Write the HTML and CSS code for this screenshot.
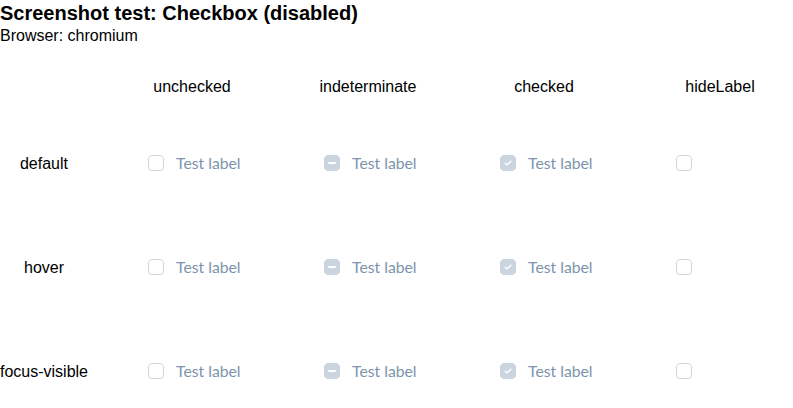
FILE: index.html
```html
<!DOCTYPE html>
<html lang="en">
<head>
<meta charset="utf-8">
<title>Screenshot test: Checkbox (disabled)</title>
<link rel="stylesheet" href="styles.css">
</head>
<body>
<h1 class="title">Screenshot test: Checkbox (disabled)</h1>
<p class="browser">Browser: chromium</p>
<div class="grid">
  <div class="corner"></div>
  <div class="head">unchecked</div>
  <div class="head">indeterminate</div>
  <div class="head">checked</div>
  <div class="head">hideLabel</div>

  <div class="rowlabel">default</div>
  <div class="cell"><span class="box"></span><span class="label">Test label</span></div>
  <div class="cell"><span class="box filled"><span class="dash"></span></span><span class="label">Test label</span></div>
  <div class="cell"><span class="box filled"><svg class="check" viewBox="0 0 16 16" width="16" height="16"><path d="M5.2 8.3 L7.1 10.1 L10.8 6.2" fill="none" stroke="#fff" stroke-width="1.4" stroke-linecap="round" stroke-linejoin="round"/></svg></span><span class="label">Test label</span></div>
  <div class="cell"><span class="box"></span></div>

  <div class="rowlabel">hover</div>
  <div class="cell"><span class="box"></span><span class="label">Test label</span></div>
  <div class="cell"><span class="box filled"><span class="dash"></span></span><span class="label">Test label</span></div>
  <div class="cell"><span class="box filled"><svg class="check" viewBox="0 0 16 16" width="16" height="16"><path d="M5.2 8.3 L7.1 10.1 L10.8 6.2" fill="none" stroke="#fff" stroke-width="1.4" stroke-linecap="round" stroke-linejoin="round"/></svg></span><span class="label">Test label</span></div>
  <div class="cell"><span class="box"></span></div>

  <div class="rowlabel">focus-visible</div>
  <div class="cell"><span class="box"></span><span class="label">Test label</span></div>
  <div class="cell"><span class="box filled"><span class="dash"></span></span><span class="label">Test label</span></div>
  <div class="cell"><span class="box filled"><svg class="check" viewBox="0 0 16 16" width="16" height="16"><path d="M5.2 8.3 L7.1 10.1 L10.8 6.2" fill="none" stroke="#fff" stroke-width="1.4" stroke-linecap="round" stroke-linejoin="round"/></svg></span><span class="label">Test label</span></div>
  <div class="cell"><span class="box"></span></div>
</div>
</body>
</html>
```

FILE: styles.css
```css
html, body {
  margin: 0;
  padding: 0;
  background: #fff;
}
body {
  font-family: "Liberation Sans", Arial, sans-serif;
  color: #000;
  overflow: hidden;
}
.title {
  margin: 0;
  padding-top: 2px;
  font-size: 20px;
  line-height: 23px;
  font-weight: bold;
}
.browser {
  margin: 0;
  padding-top: 2px;
  font-size: 16px;
  line-height: 18px;
}
.grid {
  margin-top: 17px;
  display: grid;
  grid-template-columns: 104px repeat(4, 176px);
  grid-template-rows: 49px repeat(3, 104px);
  width: 808px;
}
.head {
  display: flex;
  align-items: center;
  justify-content: center;
  font-size: 16px;
  line-height: 18px;
  padding-top: 1px;
  white-space: nowrap;
}
.rowlabel {
  display: flex;
  align-items: center;
  justify-content: center;
  padding-right: 16px;
  padding-top: 1px;
  font-size: 16px;
  line-height: 18px;
  white-space: nowrap;
}
.cell {
  display: flex;
  align-items: center;
  padding-left: 44px;
  gap: 12px;
}
.box {
  box-sizing: border-box;
  width: 16px;
  height: 16px;
  border: 1px solid #cdd6e0;
  border-radius: 4px;
  background: #fff;
  display: flex;
  align-items: center;
  justify-content: center;
  flex: none;
}
.box.filled {
  background: #cbd5df;
  border-color: #cbd5df;
}
.dash {
  width: 8px;
  height: 2px;
  border-radius: 1px;
  background: #fff;
}
.check {
  display: block;
  flex: none;
}
.label {
  font-family: Lato, "Liberation Sans", sans-serif;
  font-size: 15.75px;
  line-height: 18px;
  color: #7b94ab;
  white-space: nowrap;
}
```
